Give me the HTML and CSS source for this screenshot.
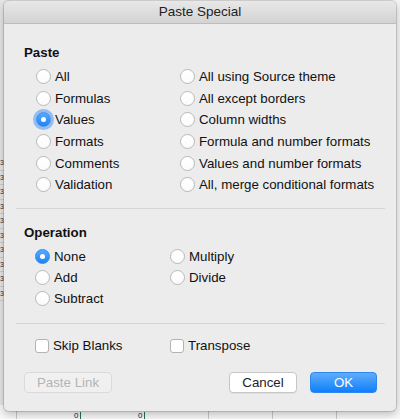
FILE: index.html
```html
<!DOCTYPE html>
<html>
<head>
<meta charset="utf-8">
<link rel="stylesheet" href="styles.css">
</head>
<body>
<div class="sheet-left">
  <span>3</span><span>3</span><span>3</span><span>3</span><span>3</span><span>3</span><span>3</span><span>3</span><span>3</span><span>3</span>
</div>
<div class="dialog">
  <div class="titlebar">Paste Special</div>
  <div class="content">
    <section class="group group-paste">
      <h2 class="heading">Paste</h2>
      <div class="radios two-col">
        <div class="col">
          <label class="opt"><span class="radio"></span>All</label>
          <label class="opt"><span class="radio"></span>Formulas</label>
          <label class="opt"><span class="radio checked focus"></span>Values</label>
          <label class="opt"><span class="radio"></span>Formats</label>
          <label class="opt"><span class="radio"></span>Comments</label>
          <label class="opt"><span class="radio"></span>Validation</label>
        </div>
        <div class="col col-right">
          <label class="opt"><span class="radio"></span>All using Source theme</label>
          <label class="opt"><span class="radio"></span>All except borders</label>
          <label class="opt"><span class="radio"></span>Column widths</label>
          <label class="opt"><span class="radio"></span>Formula and number formats</label>
          <label class="opt"><span class="radio"></span>Values and number formats</label>
          <label class="opt"><span class="radio"></span>All, merge conditional formats</label>
        </div>
      </div>
    </section>
    <div class="sep"></div>
    <section class="group group-op">
      <h2 class="heading">Operation</h2>
      <div class="radios op-grid">
        <div class="col">
          <label class="opt"><span class="radio checked"></span>None</label>
          <label class="opt"><span class="radio"></span>Add</label>
          <label class="opt"><span class="radio"></span>Subtract</label>
        </div>
        <div class="col col-op-right">
          <label class="opt"><span class="radio"></span>Multiply</label>
          <label class="opt"><span class="radio"></span>Divide</label>
        </div>
      </div>
    </section>
    <div class="sep sep2"></div>
    <div class="checks">
      <label class="chk"><span class="box"></span>Skip Blanks</label>
      <label class="chk chk-right"><span class="box"></span>Transpose</label>
    </div>
    <div class="buttons">
      <button class="btn btn-disabled">Paste Link</button>
      <div class="spacer"></div>
      <button class="btn btn-cancel">Cancel</button>
      <button class="btn btn-ok">OK</button>
    </div>
  </div>
</div>
<div class="sheet-bottom">
  <span class="cell c1">0</span><span class="cell c2">0</span>
</div>
</body>
</html>
```

FILE: styles.css
```css
html, body {
  margin: 0;
  padding: 0;
}
body {
  width: 400px;
  height: 419px;
  overflow: hidden;
  position: relative;
  background: #f4f4f4;
  font-family: "Liberation Sans", Arial, sans-serif;
  font-size: 13.3px;
  color: #111;
}
.sheet-left {
  position: absolute;
  left: 0;
  top: 0;
  width: 10px;
  height: 419px;
  background: #e6e6e6;
  display: flex;
  flex-direction: column;
  padding-top: 156px;
  box-sizing: border-box;
  font-size: 7px;
  line-height: 13.5px;
  color: #333;
}
.sheet-left span {
  margin-left: 0;
  border-bottom: 1px solid #cfcfcf;
}
.sheet-bottom {
  position: absolute;
  left: 0;
  top: 405px;
  width: 400px;
  height: 14px;
  background:
    linear-gradient(to right, transparent 16px, #c8c8c8 16px, #c8c8c8 17px, transparent 17px),
    linear-gradient(to right, transparent 208px, #c8c8c8 208px, #c8c8c8 209px, transparent 209px),
    linear-gradient(to right, transparent 272px, #c8c8c8 272px, #c8c8c8 273px, transparent 273px),
    linear-gradient(to right, transparent 336px, #c8c8c8 336px, #c8c8c8 337px, transparent 337px),
    #f7f7f7;
  z-index: 0;
}
.cell {
  position: absolute;
  top: 7px;
  font-size: 8px;
  line-height: 7px;
  color: #222;
}
.c1 { left: 74px; }
.c1::after, .c2::after {
  content: "";
  position: absolute;
  left: 6px;
  top: 0;
  width: 1px;
  height: 8px;
  background: #217346;
}
.c2 { left: 138px; }

.dialog {
  position: relative;
  z-index: 1;
  margin-left: 4px;
  margin-top: 1px;
  width: 392px;
  height: 410px;
  background: #ececec;
  border-radius: 5px;
  box-shadow: 0 0 0 1px rgba(0,0,0,0.12), 0 3px 8px rgba(0,0,0,0.25);
  display: flex;
  flex-direction: column;
  overflow: hidden;
}
.titlebar {
  height: 22px;
  line-height: 22px;
  text-align: center;
  font-size: 13.5px;
  color: #222;
  background: linear-gradient(#e8e8e8, #d3d3d3);
  border-bottom: 1px solid #bdbdbd;
  flex: none;
}
.content {
  padding: 0 11px 0 12px;
  display: flex;
  flex-direction: column;
}
.group {
  padding-left: 8px;
}
.heading {
  margin: 0;
  font-size: 13.3px;
  font-weight: bold;
  line-height: 16px;
  color: #111;
}
.group-paste {
  padding-top: 21px;
}
.group-op {
  padding-top: 16px;
}
.radios {
  display: flex;
}
.two-col {
  margin-top: 5px;
  padding-left: 12px;
}
.col {
  display: flex;
  flex-direction: column;
}
.group-paste .col:first-child {
  width: 144px;
}
.group-paste .opt {
  height: 21.6px;
}
.op-grid {
  margin-top: 5px;
  padding-left: 11px;
}
.group-op .opt {
  height: 21px;
}
.group-op .col:first-child {
  width: 135px;
}
.opt {
  display: flex;
  align-items: center;
  white-space: nowrap;
}
.radio {
  box-sizing: border-box;
  width: 15px;
  height: 15px;
  border-radius: 50%;
  border: 1px solid #b9b9b9;
  background: linear-gradient(#ffffff, #fbfbfb);
  margin-right: 4px;
  flex: none;
  position: relative;
}
.radio.checked {
  border: 1px solid #2f8af5;
  background: linear-gradient(#5aa9fb, #1e84f7);
}
.radio.checked::after {
  content: "";
  position: absolute;
  left: 4px;
  top: 4px;
  width: 5px;
  height: 5px;
  border-radius: 50%;
  background: #fff;
}
.radio.focus {
  box-shadow: 0 0 0 3px rgba(80, 150, 240, 0.55);
}
.sep {
  height: 1px;
  background: #d6d6d6;
  margin-top: 12px;
}
.sep2 {
  margin-top: 14px;
}
.checks {
  display: flex;
  padding-left: 19px;
  margin-top: 15px;
  height: 14px;
  align-items: center;
}
.chk {
  display: flex;
  align-items: center;
  white-space: nowrap;
  width: 135px;
}
.box {
  box-sizing: border-box;
  width: 14px;
  height: 14px;
  border-radius: 3px;
  border: 1px solid #b3b3b3;
  background: #fff;
  margin-right: 4px;
  flex: none;
}
.buttons {
  display: flex;
  margin-top: 19px;
  padding-left: 8px;
  padding-right: 8px;
  height: 21px;
}
.spacer {
  flex: 1;
}
.btn {
  font-family: "Liberation Sans", Arial, sans-serif;
  font-size: 13.3px;
  height: 21px;
  line-height: 19px;
  padding: 0;
  border-radius: 4px;
  box-sizing: border-box;
}
.btn-disabled {
  width: 88px;
  background: #f0f0f0;
  border: 1px solid #dadada;
  color: #b4b4b4;
}
.btn-cancel {
  width: 68px;
  background: #ffffff;
  border: 1px solid #c6c6c6;
  color: #222;
  box-shadow: 0 1px 0 rgba(0,0,0,0.05);
}
.btn-ok {
  width: 67px;
  margin-left: 13px;
  background: linear-gradient(#5fadfb, #0f80fb);
  border: 1px solid #2b86ef;
  color: #fff;
}
```
